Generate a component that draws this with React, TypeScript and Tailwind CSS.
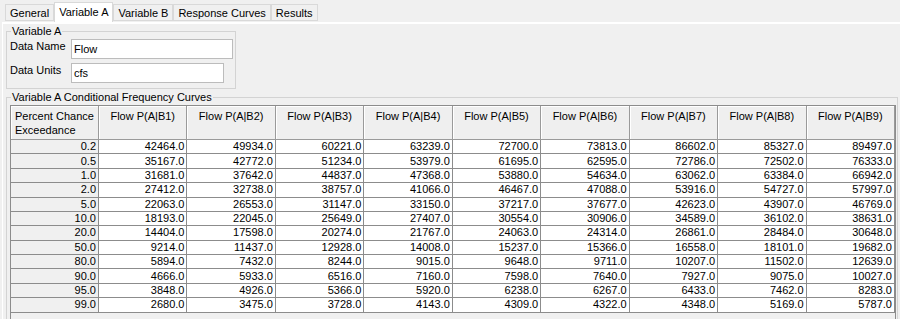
import React from "react";

const headers = [
  "Flow P(A|B1)",
  "Flow P(A|B2)",
  "Flow P(A|B3)",
  "Flow P(A|B4)",
  "Flow P(A|B5)",
  "Flow P(A|B6)",
  "Flow P(A|B7)",
  "Flow P(A|B8)",
  "Flow P(A|B9)",
];

const rows: [string, string[]][] = [
  ["0.2", ["42464.0", "49934.0", "60221.0", "63239.0", "72700.0", "73813.0", "86602.0", "85327.0", "89497.0"]],
  ["0.5", ["35167.0", "42772.0", "51234.0", "53979.0", "61695.0", "62595.0", "72786.0", "72502.0", "76333.0"]],
  ["1.0", ["31681.0", "37642.0", "44837.0", "47368.0", "53880.0", "54634.0", "63062.0", "63384.0", "66942.0"]],
  ["2.0", ["27412.0", "32738.0", "38757.0", "41066.0", "46467.0", "47088.0", "53916.0", "54727.0", "57997.0"]],
  ["5.0", ["22063.0", "26553.0", "31147.0", "33150.0", "37217.0", "37677.0", "42623.0", "43907.0", "46769.0"]],
  ["10.0", ["18193.0", "22045.0", "25649.0", "27407.0", "30554.0", "30906.0", "34589.0", "36102.0", "38631.0"]],
  ["20.0", ["14404.0", "17598.0", "20274.0", "21767.0", "24063.0", "24314.0", "26861.0", "28484.0", "30648.0"]],
  ["50.0", ["9214.0", "11437.0", "12928.0", "14008.0", "15237.0", "15366.0", "16558.0", "18101.0", "19682.0"]],
  ["80.0", ["5894.0", "7432.0", "8244.0", "9015.0", "9648.0", "9711.0", "10207.0", "11502.0", "12639.0"]],
  ["90.0", ["4666.0", "5933.0", "6516.0", "7160.0", "7598.0", "7640.0", "7927.0", "9075.0", "10027.0"]],
  ["95.0", ["3848.0", "4926.0", "5366.0", "5920.0", "6238.0", "6267.0", "6433.0", "7462.0", "8283.0"]],
  ["99.0", ["2680.0", "3475.0", "3728.0", "4143.0", "4309.0", "4322.0", "4348.0", "5169.0", "5787.0"]],
];

const tabs = ["General", "Variable A", "Variable B", "Response Curves", "Results"];

export default function App() {
  return (
    <div className="w-[900px] h-[319px] overflow-hidden bg-[#f0f0f0] text-[11px] text-black font-['Liberation_Sans',Arial,sans-serif]">
      {/* Tab strip */}
      <div className="h-[22px] flex items-end pl-[5px]">
        {tabs.map((t) =>
          t === "Variable A" ? (
            <div
              key={t}
              className="h-[20px] px-[4px] flex items-center pb-[1px] bg-white border border-b-0 border-[#d9d9d9] leading-[13px]"
            >
              {t}
            </div>
          ) : (
            <div
              key={t}
              className="h-[17px] mb-[1px] px-[4px] flex items-center pt-[1px] bg-[#f0f0f0] border border-[#d9d9d9] leading-[13px]"
            >
              {t}
            </div>
          )
        )}
      </div>

      {/* Tab panel */}
      <div className="ml-[2px] border-t-2 border-l border-white h-[300px]">
        {/* Group 1 */}
        <div className="relative mt-[7px] ml-[3px] w-[230px] h-[58px] border border-[#d3d3d3]">
          <span className="absolute left-[4px] -top-[7px] px-[1px] bg-[#f0f0f0] leading-[13px]">
            Variable A
          </span>
          <div className="flex flex-col pt-[7px] pl-[3px] gap-[4px]">
            <div className="flex items-start">
              <div className="w-[61px] pt-[1px] leading-[13px]">Data Name</div>
              <div className="w-[162px] h-[20px] border border-[#bcbcbc] bg-white flex items-center pl-[2px] pt-[1px] leading-[13px]">
                Flow
              </div>
            </div>
            <div className="flex items-start">
              <div className="w-[61px] pt-[1px] leading-[13px]">Data Units</div>
              <div className="w-[153px] h-[20px] border border-[#bcbcbc] bg-white flex items-center pl-[2px] pt-[1px] leading-[13px]">
                cfs
              </div>
            </div>
          </div>
        </div>

        {/* Group 2 */}
        <div className="relative mt-[8px] ml-[3px] w-[892px] h-[240px] border border-[#d3d3d3]">
          <span className="absolute left-[4px] -top-[7px] px-[1px] bg-[#f0f0f0] leading-[13px]">
            Variable A Conditional Frequency Curves
          </span>
          <div className="mt-[7px] ml-[3px] w-[886px] h-[240px] border border-[#8c8c8c] bg-[#f0f0f0]">
            {/* Header */}
            <div className="grid grid-cols-[88px_repeat(9,minmax(0,1fr))] h-[34px]">
              <div className="border-r border-b border-[#9a9a9a] shadow-[inset_1px_1px_0_#ffffff] bg-[#efefef] pl-[4px] pt-[4px] leading-[13.5px]">
                Percent Chance
                <br />
                Exceedance
              </div>
              {headers.map((h) => (
                <div
                  key={h}
                  className="border-r border-b border-[#9a9a9a] shadow-[inset_1px_1px_0_#ffffff] bg-[#efefef] text-center pt-[4px] leading-[13.5px]"
                >
                  {h}
                </div>
              ))}
            </div>
            {/* Body */}
            <div className="grid grid-cols-[88px_repeat(9,minmax(0,1fr))] auto-rows-[14.38px]">
              {rows.map(([p, vals]) => (
                <React.Fragment key={p}>
                  <div className="border-r border-b border-[#8c8c8c] bg-[#f0f0f0] text-right pr-[2px] leading-[13px] flex items-center justify-end">
                    {p}
                  </div>
                  {vals.map((v, i) => (
                    <div
                      key={i}
                      className="border-r border-b border-[#8c8c8c] bg-white text-right pr-[2px] leading-[13px] flex items-center justify-end"
                    >
                      {v}
                    </div>
                  ))}
                </React.Fragment>
              ))}
            </div>
          </div>
        </div>
      </div>
    </div>
  );
}
